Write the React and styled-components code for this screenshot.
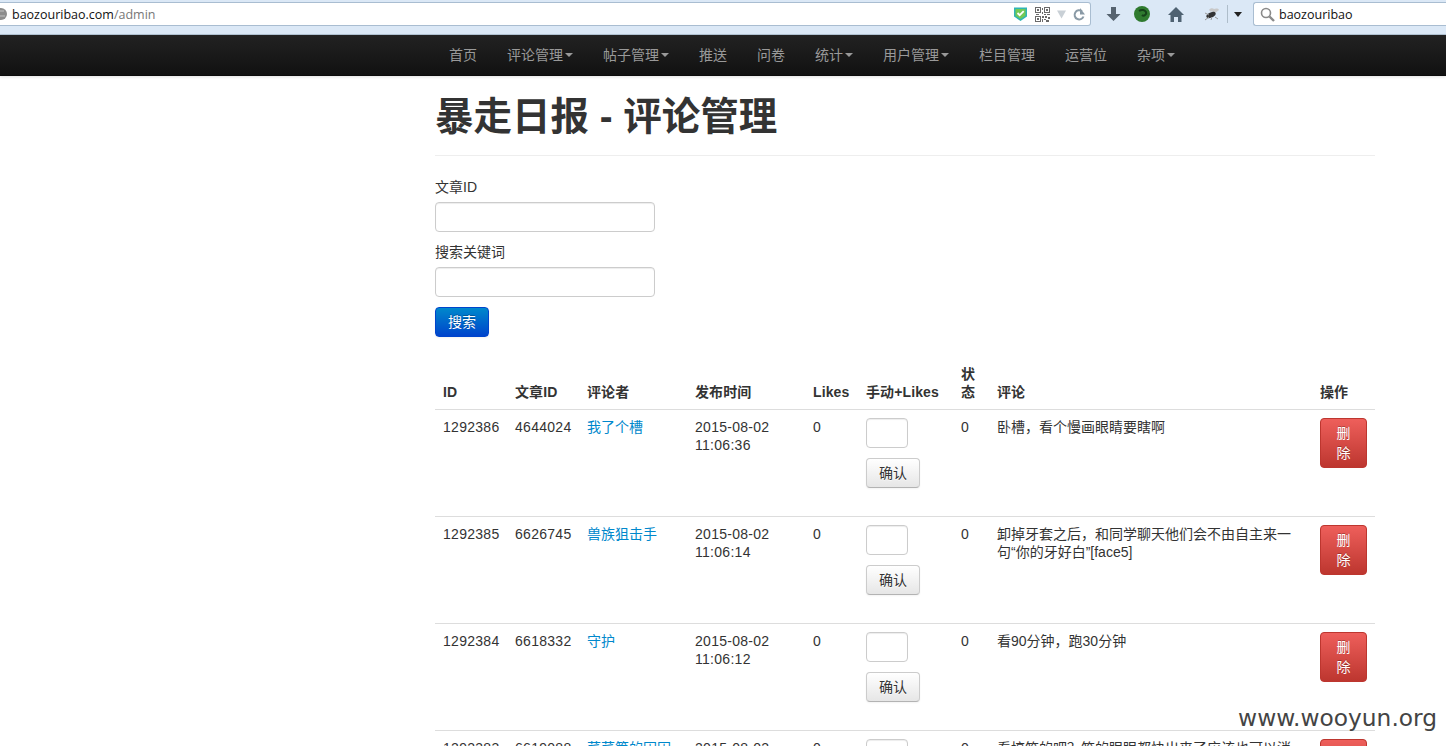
import React from 'react';
import styled, { createGlobalStyle } from 'styled-components';

const Global = createGlobalStyle`
  html, body { margin: 0; height: 746px; overflow: hidden; background: #fff; }
  body { font: 14px/20px "Liberation Sans", "Noto Sans CJK SC", sans-serif; color: #333; }
  * { box-sizing: border-box; }
`;
const Page = styled.div`position: relative; height: 746px; overflow: hidden;`;
const Chrome = styled.div`
  height: 35px; background: #dbe8f6; border-bottom: 1px solid #b4c5d6;
  display: flex; align-items: flex-start; padding-top: 2px;
`;
const UrlBar = styled.div`
  width: 1091px; height: 24px; background: #fff; border: 1px solid #a9bdd1; border-left: 0; border-radius: 0 3px 3px 0;
  display: flex; align-items: center; font: 12.5px "Open Sans", "Liberation Sans", sans-serif; color: #777;
`;
const Url = styled.div`flex: 1; display: flex; align-items: center; gap: 2px;`;
const Host = styled.span`color: #111;`;
const UrlIcons = styled.div`display: flex; align-items: center; gap: 7px; padding-right: 5px;`;
const Tools = styled.div`display: flex; align-items: center; height: 24px; width: 162px;`;
const Separator = styled.span`width: 1px; height: 18px; background: #aebdca; flex: none;`;
const Search = styled.div`
  flex: 1; height: 24px; background: #fff; border: 1px solid #a9bdd1; border-right: 0; border-radius: 3px 0 0 3px;
  display: flex; align-items: center; gap: 4px; padding-left: 6px; font: 12.5px "Open Sans", "Liberation Sans", sans-serif; color: #111;
`;
const Navbar = styled.nav`
  height: 41px; background: linear-gradient(#222, #111); border-bottom: 1px solid #0c0c0c;
  display: flex; padding-left: 434px; box-shadow: 0 1px 3px rgba(0,0,0,.12);
`;
const NavItem = styled.a`
  padding: 10px 15px 11px; color: #999; font-size: 14px; line-height: 20px; display: flex; align-items: center;
`;
const Caret = styled.i`
  width: 0; height: 0; margin-left: 2px; border-top: 4px solid #999; border-left: 4px solid transparent; border-right: 4px solid transparent;
`;
const Main = styled.main`width: 940px; margin-left: 435px;`;
const Header = styled.div`padding: 16px 0 13px; border-bottom: 1px solid #eee; margin-bottom: 21px;`;
const Title = styled.h1`margin: 0; font-size: 38.5px; line-height: 50px; font-weight: 700; color: #333;`;
const Label = styled.label`display: block; font-size: 14px; line-height: 20px; margin-bottom: 5px;`;
const Field = styled.div`margin-bottom: 10px;`;
const Input = styled.input`
  display: block; width: ${p => p.$w}px; height: 30px; padding: 4px 6px; border: 1px solid #ccc; border-radius: 4px; background: #fff;
  box-shadow: inset 0 1px 1px rgba(0,0,0,.075);
`;
const SearchBtn = styled.button`
  display: block; width: 54px; height: 30px; padding: 0; color: #fff; font: inherit; border: 1px solid #04c; border-radius: 4px;
  background: linear-gradient(#0088cc, #0044cc); text-shadow: 0 -1px 0 rgba(0,0,0,.25); box-shadow: 0 1px 2px rgba(0,0,0,.05);
`;
const Table = styled.table`
  width: 940px; table-layout: fixed; border-collapse: collapse; margin-top: 20px;
  col:nth-child(1){width:72px} col:nth-child(2){width:72px} col:nth-child(3){width:108px} col:nth-child(4){width:118px}
  col:nth-child(5){width:53px} col:nth-child(6){width:95px} col:nth-child(7){width:36px} col:nth-child(8){width:323px} col:nth-child(9){width:63px}
`;
const Th = styled.th`
  padding: 8px; text-align: left; vertical-align: bottom; line-height: 18px; font-weight: 700; font-size: 14px; letter-spacing: .12px;
  white-space: ${p => p.$wrap ? 'normal' : 'nowrap'}; border-bottom: 1px solid #ddd;
`;
const Td = styled.td`
  height: 107px; padding: 8px; vertical-align: top; line-height: 18px; border-bottom: 1px solid #ddd;
  letter-spacing: ${p => p.$num ? '.28px' : '0'};
`;
const Link = styled.a`color: #0088cc;`;
const ConfirmBtn = styled.button`
  display: block; margin: 10px 0 20px; width: 54px; height: 30px; padding: 0; font: inherit; color: #333; border: 1px solid #ccc; border-bottom-color: #b3b3b3; border-radius: 4px;
  background: linear-gradient(#fff, #e6e6e6); text-shadow: 0 1px 1px rgba(255,255,255,.75); box-shadow: 0 1px 2px rgba(0,0,0,.05);
`;
const DeleteBtn = styled.button`
  display: block; width: 47px; height: 50px; padding: 4px 12px; font: inherit; line-height: 20px; color: #fff; border: 1px solid #bd362f; border-radius: 4px;
  background: linear-gradient(#ee5f5b, #bd362f); text-shadow: 0 -1px 0 rgba(0,0,0,.25);
`;
const Watermark = styled.div`
  position: absolute; right: 9px; top: 701px; font: 23.3px/34px "DejaVu Sans", sans-serif; color: #444;
`;
const Spacer = styled.span`width: ${p => p.$w}px; flex: none;`;

const Globe = () => <svg width="10" height="14" viewBox="0 0 10 14"><circle cx="1" cy="7" r="6" fill="#8d8d8d"/><path d="M0 4h4M0 9h5" stroke="#c4c4c4"/></svg>;
const Shield = () => <svg width="15" height="16" viewBox="0 0 15 16"><path d="M1 1.500h13v9L7.500 15 1 10.500z" fill="#2fb5b5"/><path d="M2.500 3h10v6.800L7.500 13 2.500 9.800z" fill="#72c955"/><path d="M4.500 7l2.200 2.200 4-4" stroke="#fff" strokeWidth="1.800" fill="none"/></svg>;
const Qr = () => <svg width="15" height="15" viewBox="0 0 15 15" fill="#6a6a6a"><path fillRule="evenodd" d="M0 0h6v6H0zM1 1v4h4V1zM9 0h6v6H9zM10 1v4h4V1zM0 9h6v6H0zM1 10v4h4v-4z"/><path d="M2 2h2v2H2zM11 2h2v2h-2zM2 11h2v2H2zM7 1h1v2H7zM7 5h1v2H7zM9 7h2v1H9zM12 7h3v1h-3zM7 9h2v2H7zM10 9h2v2h-2zM13 10h2v2h-2zM7 12h1v3H7zM9 12h2v1H9zM11 13h3v2h-3zM1 7h3v1H1z"/></svg>;
const Down = () => <svg width="9" height="9" viewBox="0 0 9 9"><path d="M0 .5h9L4.500 8.500z" fill="#c9d0d6"/></svg>;
const Reload = () => <svg width="12" height="13" viewBox="0 0 12 13" fill="none"><path d="M10.500 8.500A4.600 4.600 0 1 1 9 3.200" stroke="#8a9aa6" strokeWidth="2"/><path d="M7 0v6.500h5z" fill="#8a9aa6"/></svg>;
const Arrow = () => <svg width="15" height="16" viewBox="0 0 15 16"><path d="M5 1h5v7h4.500L7.500 15 .5 8H5z" fill="#56636f"/></svg>;
const Ball = () => <svg width="16" height="16" viewBox="0 0 16 16"><circle cx="8" cy="8" r="8" fill="#2f7a2f"/><path d="M5 5c3-2 6-1 7 1s-2 5-4 3" stroke="#15421a" strokeWidth="2" fill="none"/></svg>;
const Home = () => <svg width="16" height="15" viewBox="0 0 16 15"><path d="M8 0L0 8h2.500v7H6v-5h4v5h3.500V8H16z" fill="#4f6272"/></svg>;
const Bug = () => <svg width="16" height="14" viewBox="0 0 16 14"><path d="M8 4c2-3 6-3 7-1l-5 4zM5 3c1-2 4-2 5-1L7 5z" fill="#c8c8c8"/><ellipse cx="7" cy="8" rx="5" ry="2.500" transform="rotate(-25 7 8)" fill="#333"/><path d="M1 13l4-3M1 6l4 2M7 13l1-3M11 10l3 2" stroke="#999"/></svg>;
const DropArrow = () => <svg width="8" height="5" viewBox="0 0 8 5"><path d="M0 0h8L4 5z" fill="#222"/></svg>;
const Magnifier = () => <svg width="15" height="15" viewBox="0 0 15 15" fill="none" stroke="#8a8a8a"><circle cx="6" cy="6" r="4.500" strokeWidth="1.600"/><path d="M9.500 9.500L14 14" strokeWidth="2.400"/></svg>;

const nav = [['首页'],['评论管理',1],['帖子管理',1],['推送'],['问卷'],['统计',1],['用户管理',1],['栏目管理'],['运营位'],['杂项',1]];
const rows = [
  ['1292386','4644024','我了个槽','2015-08-02 11:06:36','卧槽，看个慢画眼睛要瞎啊'],
  ['1292385','6626745','兽族狙击手','2015-08-02 11:06:14','卸掉牙套之后，和同学聊天他们会不由自主来一句“你的牙好白”[face5]'],
  ['1292384','6618332','守护','2015-08-02 11:06:12','看90分钟，跑30分钟'],
  ['1292383','6619088','菜菜筒的困困','2015-08-02 11:06:08','看搞笑的吧？笑的眼眼都快出来了应该也可以消'],
];

export default function App() {
  return (
    <Page>
      <Global />
      <Chrome>
        <UrlBar>
          <Url><Globe /><span><Host>baozouribao.com</Host>/admin</span></Url>
          <UrlIcons><Shield /><Qr /><Down /><Reload /></UrlIcons>
        </UrlBar>
        <Tools>
          <Spacer $w={15}/><Arrow /><Spacer $w={13}/><Ball /><Spacer $w={18}/><Home /><Spacer $w={20}/><Bug /><Spacer $w={7}/><Separator /><Spacer $w={6}/><DropArrow /><Spacer $w={11}/>
        </Tools>
        <Search><Magnifier />baozouribao</Search>
      </Chrome>
      <Navbar>
        {nav.map(([t, c]) => <NavItem key={t}>{t}{c && <Caret />}</NavItem>)}
      </Navbar>
      <Main>
        <Header><Title>暴走日报 - 评论管理</Title></Header>
        <Field><Label>文章ID</Label><Input $w={220} /></Field>
        <Field><Label>搜索关键词</Label><Input $w={220} /></Field>
        <SearchBtn>搜索</SearchBtn>
        <Table>
          <colgroup><col/><col/><col/><col/><col/><col/><col/><col/><col/></colgroup>
          <thead><tr>
            <Th>ID</Th><Th>文章ID</Th><Th>评论者</Th><Th>发布时间</Th><Th>Likes</Th><Th>手动+Likes</Th><Th $wrap>状态</Th><Th>评论</Th><Th>操作</Th>
          </tr></thead>
          <tbody>
            {rows.map(r => (
              <tr key={r[0]}>
                <Td $num>{r[0]}</Td><Td $num>{r[1]}</Td><Td><Link>{r[2]}</Link></Td><Td $num>{r[3]}</Td><Td>0</Td>
                <Td><Input $w={42} /><ConfirmBtn>确认</ConfirmBtn></Td>
                <Td>0</Td><Td>{r[4]}</Td><Td><DeleteBtn>删除</DeleteBtn></Td>
              </tr>
            ))}
          </tbody>
        </Table>
      </Main>
      <Watermark>www.wooyun.org</Watermark>
    </Page>
  );
}
